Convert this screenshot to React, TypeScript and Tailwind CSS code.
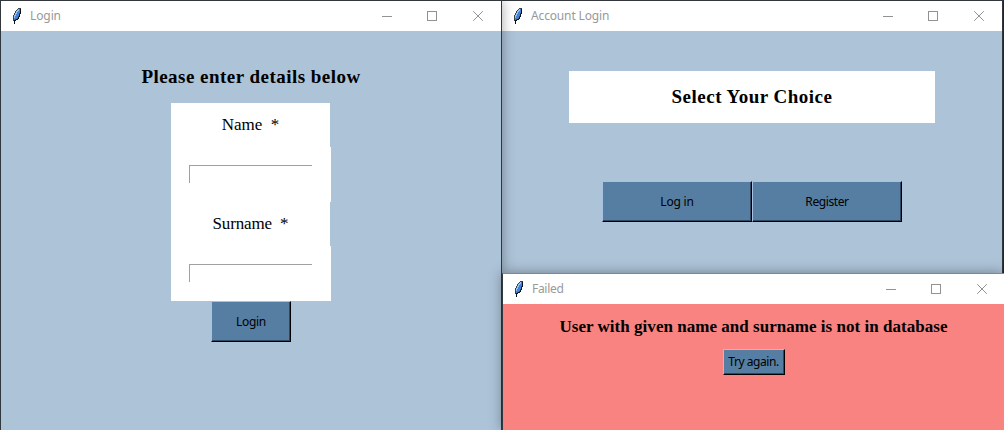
import type { ReactNode } from "react";

function Feather() {
  return (
    <svg width="12" height="17" viewBox="0 0 12 17" className="shrink-0" aria-hidden="true">
      <path d="M7 0H10V6H9V9H8V11H7V12H5V13H4V16H3V13H2V7H3V5H4V3H5V2H6V1H7Z" fill="#3b4149" />
      <path d="M9 1H10V6H9V9H8V11H7V12H5V13H4V16H3V12H5V11H7V9H8V6H9Z" fill="#0b0f16" />
      <path d="M7 1H9V5H8V8H7V10H6V11H4V12H3V7H4V5H5V3H6V2H7Z" fill="#3f83d6" />
      <path d="M7 1H8V3H7V4H6V6H5V8H4V10H3V7H4V5H5V3H6V2H7Z" fill="#98c2ef" />
    </svg>
  );
}

function Controls() {
  return (
    <svg width="102" height="10" viewBox="0 0 102 10" fill="none" stroke="#929292" className="shrink-0" aria-hidden="true">
      <path d="M0 5.5H10" />
      <rect x="45.5" y=".5" width="9" height="9" />
      <path d="M91.2 .2L100.8 9.8M100.8 .2L91.2 9.8" />
    </svg>
  );
}

function TitleBar({ title, text, bar }: { title: string; text: string; bar: string }) {
  return (
    <header className={`flex h-[30px] shrink-0 items-center justify-between ${bar}`}>
      <div className="flex items-center gap-[7px]">
        <Feather />
        <span className={`whitespace-nowrap font-['Noto_Sans',sans-serif] text-[12px] leading-4 text-[#999] ${text}`}>{title}</span>
      </div>
      <Controls />
    </header>
  );
}

function TkButton({ className, children }: { className: string; children: ReactNode }) {
  return (
    <button className={`border border-t-[#a9c1e0] border-l-[#a9c1e0] border-r-black border-b-black bg-[#557ea2] font-['Noto_Sans',sans-serif] text-[12px] leading-4 whitespace-nowrap text-black shadow-[inset_-1px_-1px_0_#2e4961] ${className}`}>
      {children}
    </button>
  );
}

function Field({ label, tracking }: { label: string; tracking: string }) {
  return (
    <>
      <label className={`flex h-[44px] w-[159px] items-center justify-center bg-white text-[17px] leading-5 whitespace-pre text-black ${tracking}`}>{label}</label>
      <div className="h-[55px] w-[160px] bg-white pt-[18px] pl-[18px]">
        <input aria-label={label} className="block h-[18px] w-[123px] border-t border-l border-[#a0a0a0] bg-white px-1 text-[12px] outline-none" />
      </div>
    </>
  );
}

export default function App() {
  return (
    <main className="relative h-[430px] w-[1004px] overflow-hidden bg-[#20262b] font-['Liberation_Serif',serif]">
      <section className="absolute top-0 left-[501px] flex h-[430px] w-[502px] flex-col border-t border-r border-l border-[#32363d] bg-[#adc3d8]">
        <TitleBar title="Account Login" text="tracking-[-0.15px]" bar="bg-white pl-[10px] pr-[17px]" />
        <div className="flex flex-col items-center pt-10">
          <h1 className="flex h-[52px] w-[366px] items-center justify-center bg-white text-[19px] leading-6 font-bold tracking-[0.5px]">Select Your Choice</h1>
          <div className="mt-[58px] flex">
            <TkButton className="h-[41px] w-[150px] tracking-[-0.2px]">Log in</TkButton>
            <TkButton className="h-[41px] w-[150px] tracking-[-0.4px]">Register</TkButton>
          </div>
        </div>
      </section>

      <section className="absolute top-0 left-0 flex h-[430px] w-[502px] flex-col border-t border-r border-l border-[#32363d] bg-[#adc3d8] shadow-[0_0_12px_rgba(0,0,0,0.35)]">
        <TitleBar title="Login" text="tracking-[-0.1px]" bar="bg-white pl-[10px] pr-[17px]" />
        <div className="flex flex-col items-center pt-[34px]">
          <h1 className="text-[19px] leading-6 font-bold tracking-[0.47px] whitespace-nowrap">Please enter details below</h1>
          <form className="mt-[14px] w-[160px]">
            <Field label="Name  *" tracking="tracking-[0px]" />
            <Field label="Surname  *" tracking="tracking-[-0.15px]" />
          </form>
          <TkButton className="h-[41px] w-[80px] tracking-[-0.3px]">Login</TkButton>
        </div>
      </section>

      <section className="absolute top-[273px] left-[502px] flex h-[157px] w-[502px] flex-col border-t border-l border-t-[#788997] border-l-[#32363d] bg-[#f98381] shadow-[0_0_12px_rgba(0,0,0,0.35)]">
        <TitleBar title="Failed" text="tracking-[-0.3px]" bar="bg-white pl-[10px] pr-[16px]" />
        <div className="flex flex-col items-center pt-[11px]">
          <h2 className="text-[17px] leading-6 font-bold tracking-[0.03px] whitespace-nowrap">User with given name and surname is not in database</h2>
          <TkButton className="mt-[10px] h-[26px] w-[62px] px-0 tracking-[-0.45px]">Try again.</TkButton>
        </div>
      </section>
    </main>
  );
}
